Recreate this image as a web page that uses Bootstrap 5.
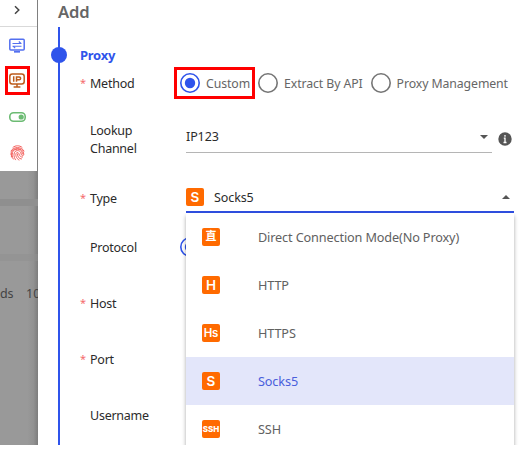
<!DOCTYPE html>
<html lang="en">
<head>
<meta charset="utf-8">
<meta name="viewport" content="width=device-width, initial-scale=1">
<title>Add proxy</title>
<link href="https://cdn.jsdelivr.net/npm/bootstrap@5.3.0/dist/css/bootstrap.min.css" rel="stylesheet">
<style>
body{font-family:"Noto Sans","Noto Sans CJK SC",sans-serif;font-size:12.5px;letter-spacing:-.1px;line-height:18px;color:#2b2b2b;background:#fff;overflow:hidden}
svg{display:block;flex:none}
.stage{width:523px;height:445px}
.backdrop-strip{width:38px;background:linear-gradient(90deg,#999 0 72%,#929292 88%,#7d7d7d);flex:none}
.rail{width:37px;height:171px;padding-right:3px}
.rail-toggle{height:27px;padding-bottom:7px;margin-right:-3px;padding-right:3px;border-bottom:1px solid #d9d9d9}
.rail-item{height:36px}
.marked{border:3px solid #f00}
.rail-item .marked{width:25px;height:29px;margin-bottom:1px}
.band{height:7px;background:#8f8f8f}
.behind{margin-top:79px;color:#444;white-space:pre}
.drawer-title{height:27px;padding:2px 0 0 20px;font-size:16.6px;font-weight:600;line-height:20px;color:#666}
.steps{margin-left:20px;padding-left:20px;border-left:2px solid #2f54eb}
.step-head{height:40px;padding-top:19px}
.dot{width:16px;height:16px;margin-left:-29px;margin-right:13px;background:#2f54eb}
.step-title{font-size:13px;font-weight:700;color:#2f54eb;letter-spacing:-.25px}
.field{height:56px}
.f-method{height:32px}
.f-lookup{height:69px;margin-top:6px;padding-bottom:1px}
.f-type{height:48px}
.f-protocol{height:50px;margin-bottom:3px}
.field-label{width:96px;flex:none;padding-top:1px;letter-spacing:-.25px}
.star{width:10px;color:#f56c6c;font-size:11px;flex:none}
.opt{color:#666;font-size:12.3px;margin-right:8px;flex:none}
.opt svg{margin-right:6px}
.opt span{padding-top:1px}
.marked.opt{width:81px;height:32px;padding-left:3px;margin-left:-12px;margin-right:3px}
.wrap-label{padding-right:40px;padding-top:2px}
.pick{height:30px;width:306px;border-bottom:1px solid #b5b5b5;margin-bottom:3px;flex:none}
.info-dot{margin-left:6px}
.pick-open{width:328px;height:30px;border-bottom:2px solid #2f4fe0;flex:none}
.pick-text{padding-left:10px;padding-top:1px}
.tile{width:18px;height:18px;border-radius:2px;background:#ff6a00;color:#fff;font:600 13.5px/18px Inter,"Noto Sans CJK SC",sans-serif;letter-spacing:0;flex:none;overflow:hidden}
.tile-cjk{font-size:11px;line-height:17px}
.tile-sm{font-size:8px;font-weight:800}
.tile-md{font-size:11.5px;letter-spacing:-.2px}
.radio-under{margin-left:-6px}
.menu{left:186px;top:213px;width:328px;box-shadow:0 3px 4px rgba(0,0,0,.35);color:#616161;font-size:12.7px;letter-spacing:-.14px}
.menu-row{height:48px;padding-left:16px}
.menu-row .tile{margin-right:38px}
.menu-row.on{background:#e3e6fa;color:#4a5fdc}
</style>
</head>
<body>
<div class="stage d-flex position-relative overflow-hidden">
  <aside class="backdrop-strip overflow-hidden">
    <nav class="rail bg-white">
      <div class="rail-toggle d-flex align-items-center justify-content-center">
        <svg width="8" height="10" viewBox="0 0 8 10" fill="none" stroke="#444" stroke-width="1.5"><path d="M2 1.200 5.800 5 2 8.800"/></svg>
      </div>
      <div class="rail-item d-flex align-items-center justify-content-center">
        <svg width="16" height="15" viewBox="0 0 16 15" fill="none" stroke="#5470f0" stroke-width="1.5"><rect x=".8" y="1.300" width="14.400" height="10.800" rx="1"/><path d="M3.500 5.500H12.500M9.800 3.500 12 5.500M12.500 8.200H3.500M6.200 10.200 4 8.200" stroke-width="1.100"/><path d="M5 13.800h6" stroke-width="1.700"/></svg>
      </div>
      <div class="rail-item d-flex align-items-center justify-content-center">
        <div class="marked d-flex align-items-center justify-content-center">
          <svg width="16" height="15" viewBox="0 0 16 15" fill="none" stroke="#bd5b1b" stroke-width="1.5"><rect x=".8" y="1" width="14.400" height="10" rx="2.500"/><path d="M4.700 3.300v5.400M7.500 8.800V3.900h2.700a1.350 1.350 0 0 1 0 2.900H7.500M8 11v3M4.600 14h6.800"/></svg>
        </div>
      </div>
      <div class="rail-item d-flex align-items-center justify-content-center">
        <svg width="17" height="10" viewBox="0 0 17 10"><rect x=".8" y=".8" width="15.400" height="8.400" rx="3.800" fill="none" stroke="#6cbb73" stroke-width="1.600"/><circle cx="12.200" cy="5" r="2.600" fill="#6cbb73"/></svg>
      </div>
      <div class="rail-item d-flex align-items-center justify-content-center">
        <svg width="15" height="16" viewBox="0 0 15 16" fill="none" stroke="#f4605c" stroke-width="1" stroke-linecap="round"><path d="M3 2.300C5.500.2 9.500.2 12 2.300M1 6C3 1.300 12 1.300 14 6M.8 9.300C.8 2 13.500 1.500 13.800 9.200c0 1.600-1.600 2-2.300.8-.7-1.400-.5-4.400-4-4.400C3 5.600 3.300 12 5.500 14.800M1.400 12C0 2.500 13 1.500 12.300 9M9 15c-3.500-1.500-4.300-7.500-1.500-7.500 2.200 0 1 4.800 5 4.600M7.500 9c0 3 1.500 4.700 4 5M3.200 14C2 12 2 9.500 2.400 8"/></svg>
      </div>
    </nav>
    <div class="pt-4"></div>
    <div class="band mt-1"></div>
    <div class="band mt-5 opacity-50"></div>
    <div class="behind mt-4">ds&nbsp;&nbsp;&nbsp; 10</div>
  </aside>

  <main class="flex-grow-1 bg-white">
    <div class="drawer-title">Add</div>
    <div class="steps h-100">
      <div class="step-head">
        <div class="d-flex align-items-center"><span class="dot rounded-circle"></span><span class="step-title">Proxy</span></div>
      </div>
      <div class="field f-method d-flex align-items-center">
        <span class="star">*</span><span class="field-label">Method</span>
        <div class="opt marked d-flex align-items-center">
          <svg width="20" height="20" viewBox="0 0 20 20"><circle cx="10" cy="10" r="9.200" fill="none" stroke="#2f54eb" stroke-width="1.600"/><circle cx="10" cy="10" r="5.200" fill="#2f54eb"/></svg><span>Custom</span>
        </div>
        <div class="opt d-flex align-items-center text-nowrap">
          <svg width="20" height="20" viewBox="0 0 20 20"><circle cx="10" cy="10" r="9.200" fill="none" stroke="#757575" stroke-width="1.600"/></svg><span>Extract By API</span>
        </div>
        <div class="opt d-flex align-items-center text-nowrap me-0">
          <svg width="20" height="20" viewBox="0 0 20 20"><circle cx="10" cy="10" r="9.200" fill="none" stroke="#757575" stroke-width="1.600"/></svg><span>Proxy Management</span>
        </div>
      </div>
      <div class="field f-lookup d-flex align-items-center">
        <span class="star"></span><span class="field-label wrap-label">Lookup Channel</span>
        <div class="pick d-flex align-items-center justify-content-between pe-1"><span>IP123</span>
          <svg width="8" height="4" viewBox="0 0 8 4"><path d="M0 0h8L4 4z" fill="#555"/></svg></div>
        <svg class="info-dot" width="14" height="14" viewBox="0 0 14 14"><circle cx="7" cy="7" r="6.700" fill="#555"/><path d="M7 3v1.700M5.800 6.200H7V10.500M5.500 10.500h3" fill="none" stroke="#fff" stroke-width="1.300"/></svg>
      </div>
      <div class="field f-type d-flex align-items-center">
        <span class="star">*</span><span class="field-label">Type</span>
        <div class="pick-open d-flex align-items-center"><span class="tile text-center">S</span><span class="pick-text flex-grow-1">Socks5</span>
          <svg class="me-1" width="8" height="4" viewBox="0 0 8 4"><path d="M0 4h8L4 0z" fill="#555"/></svg></div>
      </div>
      <div class="field f-protocol d-flex align-items-center">
        <span class="star"></span><span class="field-label">Protocol</span>
        <svg class="radio-under" width="20" height="20" viewBox="0 0 20 20"><circle cx="10" cy="10" r="9.200" fill="none" stroke="#2f54eb" stroke-width="1.600"/><circle cx="10" cy="10" r="5.200" fill="#2f54eb"/></svg>
      </div>
      <div class="field d-flex align-items-center"><span class="star">*</span><span class="field-label">Host</span></div>
      <div class="field d-flex align-items-center"><span class="star">*</span><span class="field-label">Port</span></div>
      <div class="field d-flex align-items-center"><span class="star"></span><span class="field-label">Username</span></div>
    </div>
  </main>

  <div class="menu position-absolute bg-white">
    <div class="menu-row d-flex align-items-center"><span class="tile tile-cjk text-center">直</span><span>Direct Connection Mode(No Proxy)</span></div>
    <div class="menu-row d-flex align-items-center"><span class="tile text-center">H</span><span>HTTP</span></div>
    <div class="menu-row d-flex align-items-center"><span class="tile tile-md text-center">Hs</span><span>HTTPS</span></div>
    <div class="menu-row on d-flex align-items-center"><span class="tile text-center">S</span><span>Socks5</span></div>
    <div class="menu-row d-flex align-items-center"><span class="tile tile-sm text-center">SSH</span><span>SSH</span></div>
  </div>
</div>
<script src="https://cdn.jsdelivr.net/npm/bootstrap@5.3.0/dist/js/bootstrap.bundle.min.js"></script>
</body>
</html>
